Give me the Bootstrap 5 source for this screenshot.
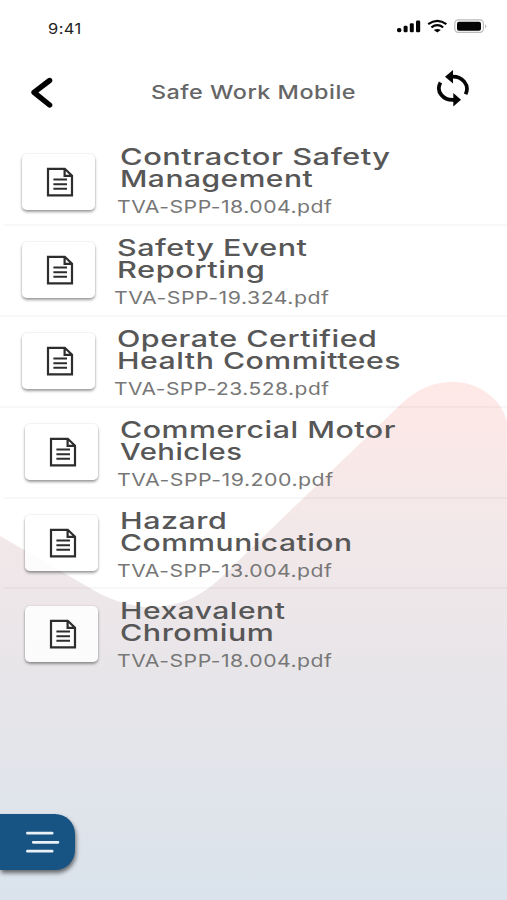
<!DOCTYPE html>
<html lang="en">
<head>
<meta charset="utf-8">
<meta name="viewport" content="width=device-width, initial-scale=1">
<title>Safe Work Mobile</title>
<link href="https://cdn.jsdelivr.net/npm/bootstrap@5.3.0/dist/css/bootstrap.min.css" rel="stylesheet">
<style>
  body { font-family: Inter, "Liberation Sans", sans-serif; background: #fff; }
  .screen { width: 507px; height: 900px; }
  .backdrop { z-index: 0; }
  .statusbar { height: 54px; padding: 0 20px 0 48px; }
  .clock { font-size: 15px; color: #222; line-height: 20px; padding-top: 19px; }
  .topbar { height: 80.4px; padding: 15px 36px 0 29px; }
  .topbar-title { font-size: 19px; font-weight: 500; color: #666; line-height: 24px; width: 205px; margin: 12px 0 0 18px; }
  .back-icon { margin-top: 6px; }
  .fit { display: block; width: max-content; white-space: nowrap; transform-origin: 0 50%; letter-spacing: .4px; }
  .doc { height: 90.8px; padding-left: 25px; }
  .doc::after { content: ""; position: absolute; left: 4px; right: 0; bottom: -1px; height: 2px; background: rgba(60,40,50,.035); }
  .doc:last-child::after { display: none; }
  .doc.flush, .doc.first { padding-left: 22px; }
  .doc.flush::after { left: 0; }
  .tile { width: 73px; height: 56px; margin-top: 17.2px; border: 0; border-radius: 5px; background: rgba(255,255,255,.85); box-shadow: 0 2px 3px rgba(0,0,0,.38), 0 0 2px rgba(0,0,0,.14); padding: 13px 0 0 24px; }
  .first .tile { margin-top: 20px; }
  .doc-text { margin-left: 21.5px; padding-top: 12px; }
  .flush .doc-text { margin-left: 21.5px; }
  .first .doc-text { margin-left: 24.5px; }
  .doc-title { font-size: 23.3px; font-weight: 500; line-height: 22px; color: #575757; margin: 0; }
  .doc-file { font-size: 17.3px; line-height: 22px; color: #777; margin: 6px 0 0 -3px; }
  .menu-tab { left: 0; top: 814px; width: 75px; height: 56px; border: 0; padding: 0 0 0 26px; border-radius: 0 20px 20px 0; background: #175383; box-shadow: 1px 3px 4px rgba(0,0,0,.55); }
</style>
</head>
<body>
<main class="screen position-relative overflow-hidden">
  <svg class="backdrop position-absolute top-0 start-0" width="507" height="900" viewBox="0 0 507 900" aria-hidden="true">
    <defs>
      <linearGradient id="wash" gradientUnits="userSpaceOnUse" x1="0" y1="380" x2="0" y2="900">
        <stop offset="0" stop-color="#ffe9e7"/>
        <stop offset=".3" stop-color="#f2e8e9"/>
        <stop offset=".58" stop-color="#e7e5e9"/>
        <stop offset="1" stop-color="#dae3ec"/>
      </linearGradient>
    </defs>
    <path fill="url(#wash)" d="M0 536 L95 591 C125 608 157 612 188 600 C208 591 219 580 234 565 L401 404 C423 383 453 375 479 388 C496 397 503 408 507 421 V900 H0 Z"/>
  </svg>

  <div class="position-relative">
    <div class="statusbar d-flex justify-content-between">
      <div class="clock"><span class="fit" data-width="34">9:41</span></div>
      <svg width="91" height="36" viewBox="396 0 91 36" aria-hidden="true">
        <g fill="#050505">
          <rect x="397" y="28" width="4.4" height="4.3" rx="1.8"/>
          <rect x="403.6" y="25.7" width="4" height="6.6" rx="1.3"/>
          <rect x="409.8" y="23.2" width="4" height="9.1" rx="1.3"/>
          <rect x="416" y="20.6" width="4.2" height="11.7" rx="1.3"/>
          <path d="M433.8 30 Q437.3 27.8 440.8 30 L437.3 32.6Z"/>
          <rect x="457" y="21.8" width="24" height="8.9" rx="2"/>
        </g>
        <path d="M428.2 24.2 Q437.3 17.5 446.4 24.2 M431.4 27.3 Q437.3 22.9 443.2 27.3" fill="none" stroke="#050505" stroke-width="2.1"/>
        <rect x="454.8" y="19.9" width="28.6" height="12.4" rx="3.6" fill="none" stroke="#bbb" stroke-width="1.2"/>
        <path d="M485.2 24.2 Q487.4 26.2 485.2 28.2Z" fill="#aaa"/>
      </svg>
    </div>

    <header class="topbar d-flex align-items-start justify-content-between">
      <svg class="back-icon" width="24" height="34" viewBox="29 75 24 34" role="img" aria-label="Back">
        <path d="M49.6 80.5 L34 92.4 L49.6 105" fill="none" stroke="#000" stroke-width="5.4" stroke-linecap="round" stroke-linejoin="round"/>
      </svg>
      <h1 class="topbar-title"><span class="fit" data-width="205.5">Safe Work Mobile</span></h1>
      <svg width="36" height="40" viewBox="435 69 36 40" role="img" aria-label="Refresh">
        <g fill="none" stroke="#050505" stroke-width="3.7">
          <path d="M450.5 76.8 C462.5 75.5 470 85 465.6 94.3"/>
          <path d="M440.5 82.5 C435.5 91.5 443 101.2 455.3 99.8"/>
        </g>
        <path d="M453 70 V83.5 L445 76.7Z M453.3 93 V106.5 L461 99.8Z" fill="#050505"/>
      </svg>
    </header>

    <section>
      <article class="doc first d-flex position-relative">
        <div class="card tile flex-shrink-0"><svg width="28" height="30"><use href="#page"/></svg></div>
        <div class="doc-text">
          <h2 class="doc-title"><span class="fit" data-width="270">Contractor Safety</span><span class="fit" data-width="193">Management</span></h2>
          <p class="doc-file"><span class="fit" data-width="216">TVA-SPP-18.004.pdf</span></p>
        </div>
      </article>
      <article class="doc flush d-flex position-relative">
        <div class="card tile flex-shrink-0"><svg width="28" height="30"><use href="#page"/></svg></div>
        <div class="doc-text">
          <h2 class="doc-title"><span class="fit" data-width="191">Safety Event</span><span class="fit" data-width="148">Reporting</span></h2>
          <p class="doc-file"><span class="fit" data-width="216">TVA-SPP-19.324.pdf</span></p>
        </div>
      </article>
      <article class="doc flush d-flex position-relative">
        <div class="card tile flex-shrink-0"><svg width="28" height="30"><use href="#page"/></svg></div>
        <div class="doc-text">
          <h2 class="doc-title"><span class="fit" data-width="260">Operate Certified</span><span class="fit" data-width="284">Health Committees</span></h2>
          <p class="doc-file"><span class="fit" data-width="216">TVA-SPP-23.528.pdf</span></p>
        </div>
      </article>
      <article class="doc d-flex position-relative">
        <div class="card tile flex-shrink-0"><svg width="28" height="30"><use href="#page"/></svg></div>
        <div class="doc-text">
          <h2 class="doc-title"><span class="fit" data-width="276">Commercial Motor</span><span class="fit" data-width="123">Vehicles</span></h2>
          <p class="doc-file"><span class="fit" data-width="216">TVA-SPP-19.200.pdf</span></p>
        </div>
      </article>
      <article class="doc d-flex position-relative">
        <div class="card tile flex-shrink-0"><svg width="28" height="30"><use href="#page"/></svg></div>
        <div class="doc-text">
          <h2 class="doc-title"><span class="fit" data-width="107">Hazard</span><span class="fit" data-width="232">Communication</span></h2>
          <p class="doc-file"><span class="fit" data-width="216">TVA-SPP-13.004.pdf</span></p>
        </div>
      </article>
      <article class="doc d-flex position-relative">
        <div class="card tile flex-shrink-0"><svg width="28" height="30"><use href="#page"/></svg></div>
        <div class="doc-text">
          <h2 class="doc-title"><span class="fit" data-width="165">Hexavalent</span><span class="fit" data-width="154">Chromium</span></h2>
          <p class="doc-file"><span class="fit" data-width="216">TVA-SPP-18.004.pdf</span></p>
        </div>
      </article>
    </section>
  </div>

  <button class="menu-tab position-absolute d-flex align-items-center" type="button" aria-label="Menu">
    <svg width="34" height="24" viewBox="0 0 34 24" fill="none" stroke="#e9f1f7" stroke-width="2.7" stroke-linecap="round">
      <path d="M1.4 3.2H26.2M7.2 12.3H32M1.4 21.2H26.2"/>
    </svg>
  </button>
</main>

<svg width="0" height="0" class="position-absolute" aria-hidden="true">
  <symbol id="page" viewBox="0 0 28 30">
    <path d="M2 1.8H18.8L26 8.6V28.4H2Z M18.6 1.8V8.8H26" fill="none" stroke="#2d2d2d" stroke-width="2.2"/>
    <path d="M7.4 12.6H21M7.4 17.3H21M7.4 21.8H21" fill="none" stroke="#2d2d2d" stroke-width="2"/>
  </symbol>
</svg>

<script src="https://cdn.jsdelivr.net/npm/bootstrap@5.3.0/dist/js/bootstrap.bundle.min.js"></script>
<script>
  document.querySelectorAll('.fit').forEach(function (el) {
    el.style.transform = 'scaleX(' + (el.dataset.width / el.offsetWidth) + ')';
  });
</script>
</body>
</html>
